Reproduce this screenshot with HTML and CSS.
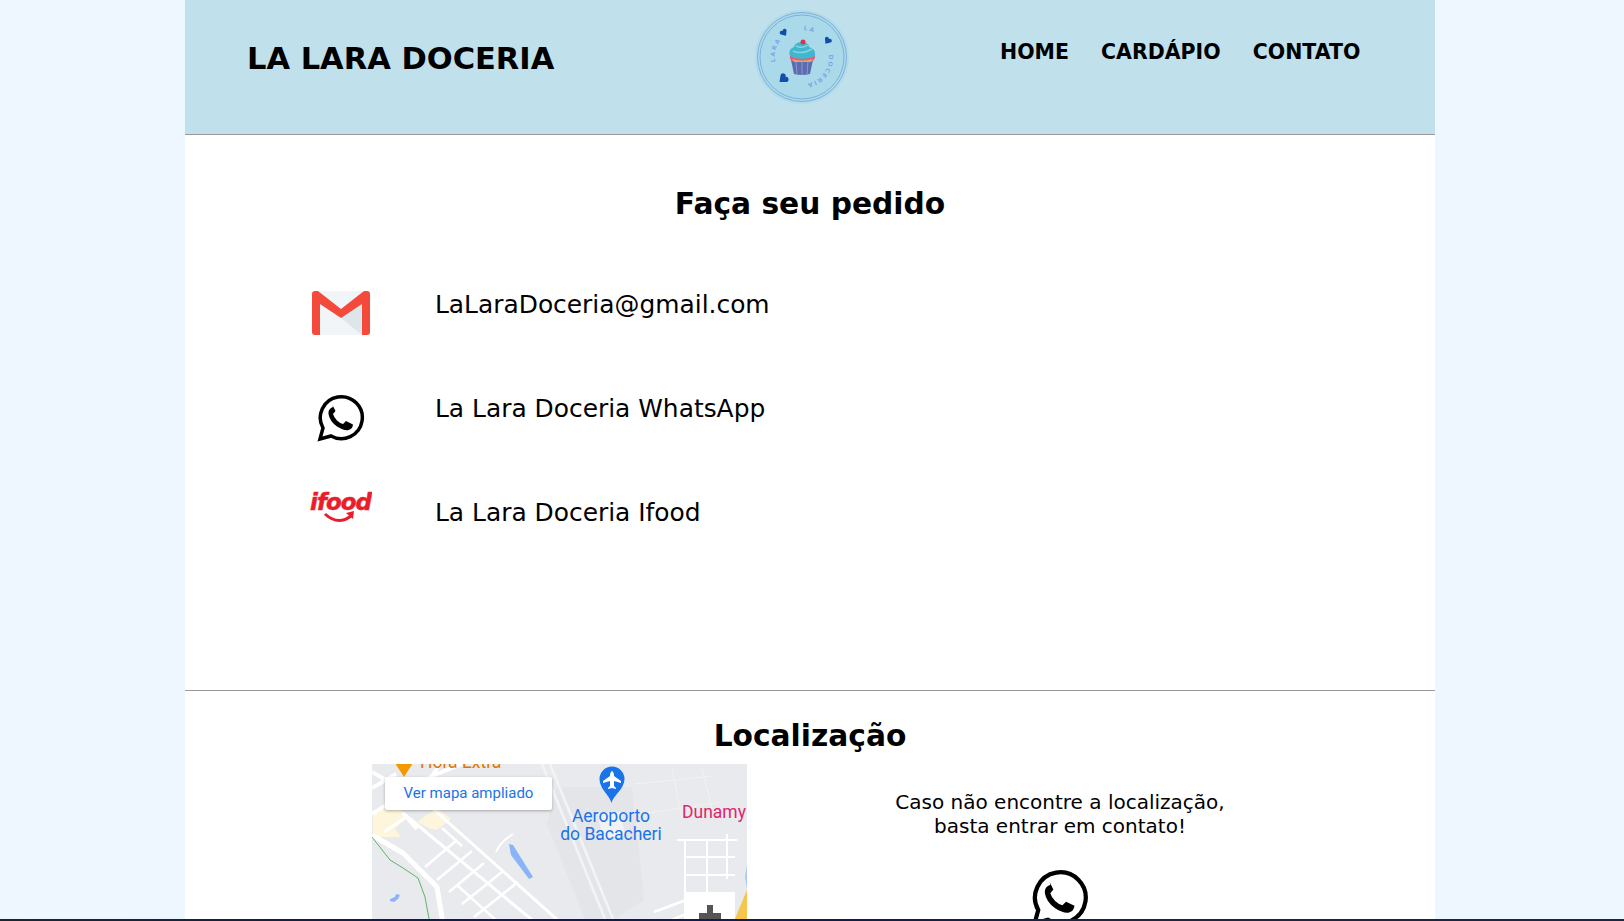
FILE: index.html
```html
<!DOCTYPE html>
<html lang="pt-BR">

<head>
  <meta charset="UTF-8">
  <meta name="viewport" content="width=device-width, initial-scale=1.0">
  <title>La Lara Doceria</title>
  <link rel="stylesheet" href="styles.css">
</head>

<body>
  <div class="page">
    <header class="topBar">
      <h1 class="brand">LA LARA DOCERIA</h1>
      <svg class="logo" viewBox="0 0 94 94">
        <defs>
          <path id="ringPath" d="M47 20a27 27 0 1 1 0 54a27 27 0 1 1 0-54"></path>
          <path id="heart" d="M0 3.500L-3.500-.5a2 2 0 0 1 3.500-2a2 2 0 0 1 3.500 2z"></path>
        </defs>
        <circle cx="47" cy="47" r="47" fill="#a8d8ea" opacity=".6"></circle>
        <circle cx="47" cy="47" r="44.500" fill="#aadaea" stroke="#7fb0dc" stroke-width="1"></circle>
        <circle cx="47" cy="47" r="42" fill="none" stroke="#7fb0dc" stroke-width="1"></circle>
        <text class="logoText"><textPath href="#ringPath" startOffset="1%">LA</textPath></text>
        <text class="logoText"><textPath href="#ringPath" startOffset="72%">LARA</textPath></text>
        <text class="logoText"><textPath href="#ringPath" startOffset="23.500%">DOCERIA</textPath></text>
        <use href="#heart" class="logoHeart" transform="translate(29 23) rotate(-35)"></use>
        <use href="#heart" class="logoHeart" transform="translate(72.500 31) rotate(35)"></use>
        <use href="#heart" class="logoHeart" transform="translate(28 69) rotate(50) scale(1.300)"></use>
        <path d="M36 50h22l-3 14q-8 2-16 0z" fill="#5d6cae"></path>
        <path d="M41 51l1 13M47 51v14M53 51l-1 13" stroke="#8b96cc" stroke-width="1"></path>
        <path d="M35 45q12 5 25 0v3q-2 4-6 3H41q-5 1-6-3z" fill="#e8577f"></path>
        <path d="M37 49q10 3 21 0l-2 3H39z" fill="#eba35d"></path>
        <path d="M35 46c-2-5 1-8 4-9 1-4 5-5 8-5 4 0 7 2 7 5 4 1 7 4 6 9-8 4-17 4-25 0z" fill="#42b6cc"></path>
        <path d="M38 41q9 4 19-2M41 36q6 3 12-1" fill="none" stroke="#7fd6e6" stroke-width="1.500"></path>
        <circle cx="48" cy="32" r="2.500" fill="#d8344a"></circle>
      </svg>
      <nav class="menu">
        <a href="#">HOME</a>
        <a href="#">CARDÁPIO</a>
        <a href="#">CONTATO</a>
      </nav>
    </header>

    <section class="pedido">
      <h2 class="title">Faça seu pedido</h2>
      <div class="contactRow">
        <div class="iconBox">
          <svg class="gmail" viewBox="0 0 58 44">
            <path d="M4 0h50v44H4z" fill="#f1f5f7"></path>
            <path d="M29 27L50 13v31z" fill="#dde6ea"></path>
            <path d="M3 0h3L29 18 52 0h3q3 0 3 3v38q0 3-3 3h-5V13L29 27 8 13v31H3q-3 0-3-3V3q0-3 3-3z" fill="#f44a3c"></path>
          </svg>
        </div>
        <a class="contactText" href="#">LaLaraDoceria@gmail.com</a>
      </div>
      <div class="contactRow">
        <div class="iconBox">
          <svg class="whats" viewBox="0 0 48 48">
            <use href="#whatsShape"></use>
          </svg>
        </div>
        <a class="contactText" href="#">La Lara Doceria WhatsApp</a>
      </div>
      <div class="contactRow">
        <div class="iconBox">
          <svg class="ifood" viewBox="0 0 62 34">
            <text x="0" y="20" class="ifoodText">ifood</text>
            <path d="M15 24q13 12 26 2" fill="none" stroke="#ea1d2c" stroke-width="3"></path>
            <path d="M36 23l8-2-1 8z" fill="#ea1d2c"></path>
          </svg>
        </div>
        <a class="contactText" href="#">La Lara Doceria Ifood</a>
      </div>
    </section>

    <section class="local">
      <h2 class="title">Localização</h2>
      <div class="localGrid">
        <div class="map">
          <svg class="mapDraw" viewBox="0 0 375 160">
            <rect width="375" height="160" fill="#e8eaed"></rect>
            <path d="M185 23h75l12 113-37 24h-20l-40-100z" fill="#e3e5e8"></path>
            <path d="M1 46h18l4-5 8 6 2 8-10 10 6 8H1zM45 58l20-14 14 11-14 11-6-1z" fill="#fdf5dc"></path>
            <path d="M0 71l31 18 34 34 6 37" fill="none" stroke="#fff" stroke-width="5"></path>
            <path d="M0 8l28 16M0 24l24-14M0 50l60-38 30-12M31 49l14 16M68 0l-8 12" fill="none" stroke="#fff" stroke-width="4"></path>
            <path d="M31 49l134 111M50 35l140 125M12 68l24-16" fill="none" stroke="#fff" stroke-width="3"></path>
            <path d="M53 103l32-27M65 116l35-29M77 128l35-29M90 140l40-32M102 153l44-35M70 64l20 18M86 122l40 36" fill="none" stroke="#fff" stroke-width="2.500"></path>
            <path d="M0 73l18 23 13 8 15 10 7 19 5 27" fill="none" stroke="#5fb36b" stroke-width="1"></path>
            <path d="M170 0l65 160M178 0l65 160" fill="none" stroke="#f3f4f6" stroke-width="2.500"></path>
            <path d="M225 50l24-2 4 24-22 2z" fill="#f1f2f4"></path>
            <path d="M124 88q4-10 17-18" fill="none" stroke="#fff" stroke-width="2"></path>
            <path d="M137 80l4 1 20 32-4 2-18-24z" fill="#8ab4f8"></path>
            <path d="M262 20l80-8M270 50l80-12M300 5l10 50M330 5l10 40" fill="none" stroke="#f1f2f4" stroke-width="1"></path>
            <path d="M305 76h60M313 93h50M313 111h50M313 76v84M335 76v84M355 70v45" fill="none" stroke="#fff" stroke-width="2"></path>
            <path d="M282 148l32-12M290 160l24-10" fill="none" stroke="#fff" stroke-width="2.500"></path>
            <path d="M375 101v24l-2-12z" fill="#a8c7fa"></path>
            <path d="M365 150l10-24v34h-14z" fill="#f9c44a"></path>
            <path d="M18 135l5-2 1-3 4 1-2 4-4 3-4-1z" fill="#8ab4f8"></path>
            <path d="M23-1h18l-9 14z" fill="#f29900"></path>
            <path d="M239.500 39c-2-8-12-14-12-24a12.500 12.500 0 0 1 25 0c0 10-11 16-13 24z" fill="#1a73e8"></path>
            <path d="M240 7q2 1 2 5l7 5v2l-7-2v5l2 2v1l-4-1-4 1v-1l2-2v-5l-7 2v-2l7-5q0-4 2-5z" fill="#fff"></path>
          </svg>
          <span class="mapLabel hora">Hora Extra</span>
          <a class="mapLink" href="#">Ver mapa ampliado</a>
          <span class="mapLabel airport">Aeroporto<br>do Bacacheri</span>
          <span class="mapLabel dunamy">Dunamy</span>
          <div class="zoomBtn"><span class="plus"></span></div>
        </div>
        <div class="localInfo">
          <p class="localText">Caso não encontre a localização,<br>basta entrar em contato!</p>
          <svg class="whatsBig" viewBox="0 0 48 48">
            <g id="whatsShape">
              <path d="M3 45l3-11A21 21 0 1 1 14 42z" fill="none" stroke="#000" stroke-width="3.500"></path>
              <path d="M16 13l-2 1q-3 2-2.500 6 1 7 8.500 12.500 7 4.500 11.500 3.500 4-1 4.500-5.500l-7-3.500-3 3q-3.500-1-6-3.500-3-3-4-6.500l2.500-3-3-6z" fill="#000"></path>
            </g>
          </svg>
        </div>
      </div>
    </section>
  </div>
  <div class="bottomLine"></div>
</body>

</html>
```

FILE: styles.css
```css
* {
  box-sizing: border-box;
}

html,
body {
  height: 100%;
}

body {
  margin: 0;
  background-color: #eef7ff;
  font-family: "DejaVu Sans", Verdana, sans-serif;
  color: #000;
  overflow: hidden;
}

a {
  color: inherit;
  text-decoration: none;
}

.page {
  width: 1250px;
  margin-left: 185px;
  background-color: #fff;
  height: 100%;
  overflow: hidden;
}

.topBar {
  height: 135px;
  background-color: #c0e0ec;
  border-bottom: 1px solid #999;
  display: flex;
  align-items: flex-start;
  padding-left: 62px;
}

.brand {
  margin: 41px 0 0;
  width: 508px;
  font-size: 30.500px;
  line-height: 36px;
  font-weight: 700;
}

.logo {
  width: 94px;
  height: 94px;
  margin-top: 10px;
}

.logoText {
  font-size: 6px;
  font-weight: 700;
  fill: #7fa6e8;
  letter-spacing: 1.500px;
}

.logoHeart {
  fill: #0f4fa8;
}

.menu {
  margin: 39px 0 0 151px;
  display: flex;
  gap: 32px;
  font-size: 20.500px;
  line-height: 26px;
  font-weight: 700;
}

.pedido {
  height: 556px;
  border-bottom: 1px solid #999;
  padding-top: 51px;
}

.title {
  margin: 0;
  text-align: center;
  font-size: 29.700px;
  line-height: 36px;
  font-weight: 700;
}

.pedido .title {
  margin-bottom: 68px;
}

.contactRow {
  display: flex;
  height: 104px;
  padding-left: 126px;
}

.iconBox {
  width: 60px;
  display: flex;
  justify-content: center;
  align-items: flex-start;
}

.gmail {
  width: 58px;
  height: 44px;
  margin-top: 1px;
}

.whats {
  width: 48px;
  height: 48px;
}

.ifood {
  width: 62px;
  height: 34px;
  margin-top: -8px;
  flex-shrink: 0;
}

.ifoodText {
  font-size: 23px;
  font-weight: 700;
  font-style: italic;
  fill: #ea1d2c;
  stroke: #ea1d2c;
  stroke-width: .5px;
  letter-spacing: -1px;
}

.contactText {
  margin-left: 64px;
  font-size: 24.900px;
  line-height: 30px;
}

.local {
  padding-top: 27px;
}

.localGrid {
  display: flex;
  margin-top: 10px;
  padding-left: 187px;
}

.map {
  position: relative;
  width: 375px;
  height: 160px;
  overflow: hidden;
  font-family: Roboto, sans-serif;
}

.mapDraw {
  display: block;
  width: 375px;
  height: 160px;
}

.mapLink {
  position: absolute;
  left: 13px;
  top: 13px;
  width: 167px;
  height: 33px;
  background-color: #fff;
  border-radius: 2px;
  box-shadow: 0 1px 3px rgba(0, 0, 0, .3);
  color: #1a73e8;
  font-size: 15px;
  line-height: 33px;
  text-align: center;
}

.mapLabel {
  position: absolute;
  font-size: 17.500px;
  line-height: 18px;
  text-align: center;
}

.hora {
  left: 48px;
  top: -11px;
  color: #e37400;
}

.airport {
  left: 172px;
  top: 43px;
  width: 134px;
  color: #1a73e8;
}

.dunamy {
  left: 310px;
  top: 39px;
  color: #e3256b;
  white-space: nowrap;
}

.zoomBtn {
  position: absolute;
  left: 313px;
  top: 128px;
  width: 50px;
  height: 32px;
  background-color: #fff;
  overflow: hidden;
}

.plus {
  position: absolute;
  left: 14px;
  top: 13px;
  width: 22px;
  height: 22px;
  background:
    linear-gradient(#555, #555) center / 100% 6px no-repeat,
    linear-gradient(#555, #555) center / 6px 100% no-repeat;
}

.localInfo {
  width: 360px;
  margin-left: 133px;
  text-align: center;
}

.localText {
  margin: 26px 0 0;
  font-size: 20px;
  line-height: 24px;
}

.whatsBig {
  display: block;
  width: 58px;
  height: 58px;
  margin: 31px auto 0;
}

.bottomLine {
  position: fixed;
  left: 0;
  right: 0;
  bottom: 0;
  height: 2px;
  background: linear-gradient(90deg, #1b2531, #0f1c4d 30%, #0f1c4d 50%, #1d2540 70%);
}
```
